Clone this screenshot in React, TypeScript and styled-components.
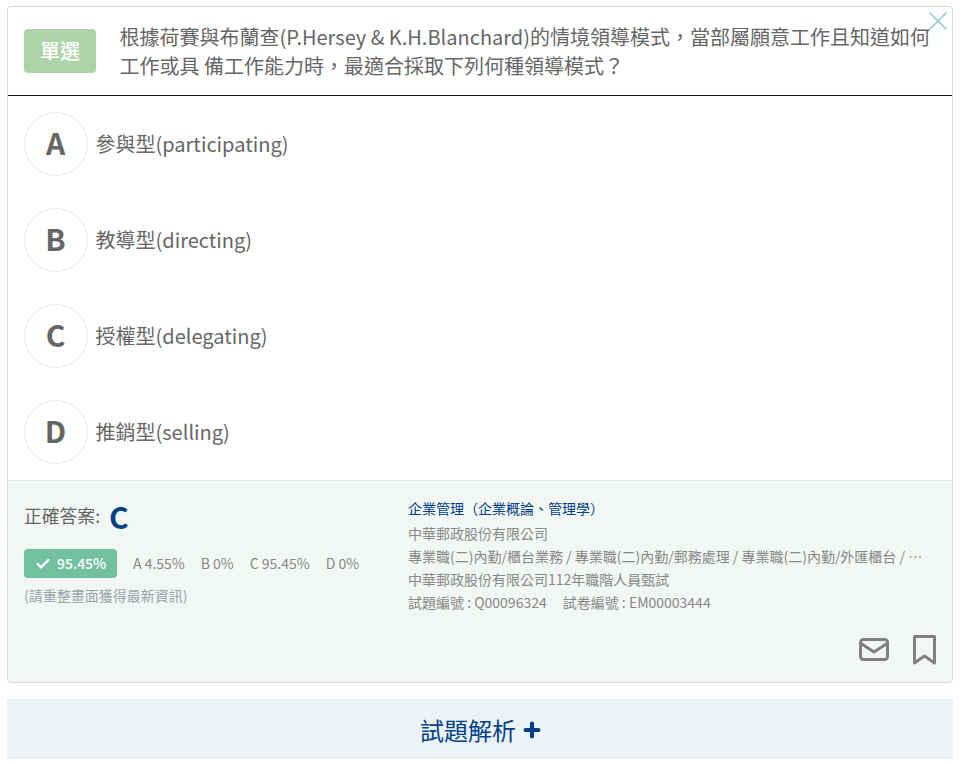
import React from 'react'
import styled, { createGlobalStyle } from 'styled-components'
import { Check, Plus, X } from 'lucide-react'

const GlobalStyle = createGlobalStyle`
  html, body {
    margin: 0;
    padding: 0;
    background: #fff;
    font-family: "Noto Sans CJK TC", "Noto Sans", sans-serif;
  }
`

const Page = styled.div`
  padding: 6px 7px 5px;
`

const Card = styled.div`
  position: relative;
  border: 1px solid #d9d9d9;
  border-radius: 4px;
  background: #fff;
`

const CloseButton = styled.div`
  position: absolute;
  top: -2px;
  right: -2px;
  color: #86c5cd;
  line-height: 0;
`

const Header = styled.div`
  display: flex;
  align-items: center;
  height: 89px;
  box-sizing: border-box;
  padding: 0 16px;
  border-bottom: 1px solid #111;
`

const Badge = styled.div`
  flex: none;
  width: 72px;
  height: 44px;
  margin-right: 24px;
  border-radius: 4px;
  background: #add4a9;
  color: #fff;
  font-size: 20px;
  font-weight: 500;
  line-height: 44px;
  text-align: center;
`

const Question = styled.div`
  font-size: 20px;
  line-height: 29px;
  color: #666;
  width: 816px;
  margin-left: -0.5px;
`

const Option = styled.div`
  display: flex;
  align-items: center;
  height: 96px;
  padding-left: 16px;
`

const Letter = styled.div`
  width: 64px;
  height: 64px;
  box-sizing: border-box;
  flex: none;
  padding: 0 1px 4px 0;
  border: 1px solid #e6e6e6;
  border-radius: 50%;
  display: flex;
  align-items: center;
  justify-content: center;
  font-size: 30px;
  font-weight: 700;
  color: #666;
`

const OptionText = styled.div`
  margin: 0 0 2px 7.5px;
  font-size: 20px;
  color: #666;
`

const Footer = styled.div`
  height: 202px;
  box-sizing: border-box;
  padding: 16px 16px 0;
  border-top: 1px solid #e4ebe6;
  border-radius: 0 0 4px 4px;
  background: #f3f7f3;
  display: grid;
  grid-template-columns: 384px 1fr;
`

const AnswerRow = styled.div`
  display: flex;
  align-items: center;
  height: 40px;
  margin-top: -1px;
  font-size: 17.8px;
  color: #666;
`

const AnswerLabel = styled.span`
  margin-bottom: 2px;
`

const AnswerLetter = styled.span`
  margin-left: 9px;
  font-size: 30px;
  font-weight: 700;
  color: #023f88;
  line-height: 40px;
`

const StatsRow = styled.div`
  display: flex;
  align-items: center;
  margin-top: 13px;
  font-size: 14px;
  color: #888;
`

const RateBadge = styled.div`
  display: flex;
  align-items: center;
  gap: 6px;
  width: 93px;
  height: 29px;
  box-sizing: border-box;
  padding-left: 11px;
  margin-right: 16px;
  border-radius: 4px;
  background: #73bfa2;
  color: #fff;
  font-weight: 500;
`

const RateValue = styled.span`
  margin-bottom: 2px;
`

const Stat = styled.span`
  margin: 0 16px 2px 0;
`

const Hint = styled.div`
  margin-top: 7px;
  font-size: 14px;
  line-height: 20px;
  color: #9aa3ac;
`

const Meta = styled.div`
  min-width: 0;
  position: relative;
`

const Subject = styled.div`
  font-size: 14px;
  line-height: 23px;
  margin-bottom: 2px;
  color: #023f88;
`

const MetaLine = styled.div`
  font-size: 14px;
  line-height: 23px;
  color: #888;
  white-space: nowrap;
`

const CodeLabel = styled.span`
  margin-right: 16px;
`

const Actions = styled.div`
  position: absolute;
  right: -1px;
  top: 137px;
  display: flex;
  align-items: center;
  gap: 22px;
  color: #808080;
`

const IconBox = styled.div`
  line-height: 0;
`

const PlusIcon = styled(Plus)`
  margin-top: 2px;
`

const Analysis = styled.div`
  margin-top: 16px;
  height: 60px;
  box-sizing: border-box;
  padding-left: 3px;
  display: flex;
  align-items: center;
  justify-content: center;
  gap: 5px;
  background: #ebf3f7;
  color: #023f88;
  font-size: 24px;
`

const options = [
  { key: 'A', text: '參與型(participating)' },
  { key: 'B', text: '教導型(directing)' },
  { key: 'C', text: '授權型(delegating)' },
  { key: 'D', text: '推銷型(selling)' },
]

const stats = ['A 4.55%', 'B 0%', 'C 95.45%', 'D 0%']

const App: React.FC = () => (
  <Page>
    <GlobalStyle />
    <Card>
      <CloseButton>
        <X size={32} strokeWidth={1} />
      </CloseButton>
      <Header>
        <Badge>單選</Badge>
        <Question>
          根據荷賽與布蘭查(P.Hersey &amp; K.H.Blanchard)的情境領導模式，當部屬願意工作且知道如何工作或具 備工作能力時，最適合採取下列何種領導模式？
        </Question>
      </Header>
      {options.map(item => (
        <Option key={item.key}>
          <Letter>{item.key}</Letter>
          <OptionText>{item.text}</OptionText>
        </Option>
      ))}
      <Footer>
        <div>
          <AnswerRow>
            <AnswerLabel>正確答案:</AnswerLabel>
            <AnswerLetter>C</AnswerLetter>
          </AnswerRow>
          <StatsRow>
            <RateBadge>
              <Check size={16} strokeWidth={3.5} />
              <RateValue>95.45%</RateValue>
            </RateBadge>
            {stats.map(item => (
              <Stat key={item}>{item}</Stat>
            ))}
          </StatsRow>
          <Hint>(請重整畫面獲得最新資訊)</Hint>
        </div>
        <Meta>
          <Subject>企業管理（企業概論、管理學）</Subject>
          <MetaLine>中華郵政股份有限公司</MetaLine>
          <MetaLine>專業職(二)內勤/櫃台業務 / 專業職(二)內勤/郵務處理 / 專業職(二)內勤/外匯櫃台 / …</MetaLine>
          <MetaLine>中華郵政股份有限公司112年職階人員甄試</MetaLine>
          <MetaLine>
            <CodeLabel>試題編號 : Q00096324</CodeLabel>試卷編號 : EM00003444
          </MetaLine>
          <Actions>
            <IconBox>
              <svg width="32" height="32" viewBox="0 0 32 32" fill="none" stroke="currentColor" strokeWidth="3" strokeLinejoin="round">
                <rect x="2.5" y="5.5" width="27" height="20" rx="3" />
                <path d="M3 9.5 16 18 29 9.5" />
              </svg>
            </IconBox>
            <IconBox>
              <svg width="25" height="32" viewBox="0 0 25 32" fill="none" stroke="currentColor" strokeWidth="3" strokeLinejoin="round">
                <path d="M2.5 2.5h20v26.5l-10-7-10 7z" />
              </svg>
            </IconBox>
          </Actions>
        </Meta>
      </Footer>
    </Card>
    <Analysis>
      試題解析
      <PlusIcon size={22} strokeWidth={4.5} />
    </Analysis>
  </Page>
)

export default App
